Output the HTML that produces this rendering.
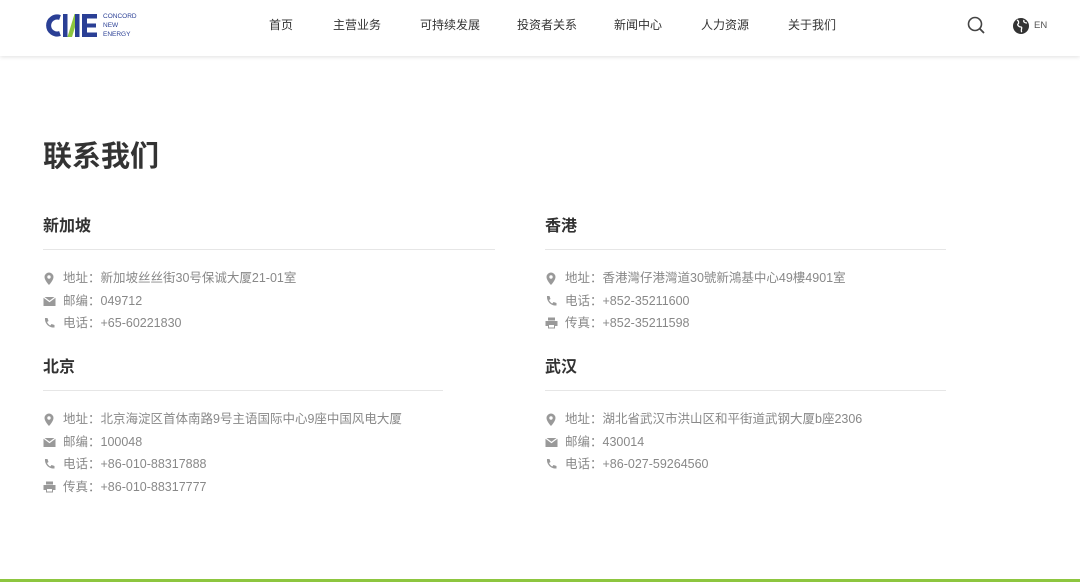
<!DOCTYPE html><html><head><meta charset="utf-8"><style>
*{margin:0;padding:0;box-sizing:border-box}
body{width:1080px;height:582px;overflow:hidden;background:#fff;font-family:"Liberation Sans","Noto Sans CJK SC",sans-serif;position:relative}
.hd{position:absolute;left:0;top:0;width:1080px;height:56px;background:#fff;box-shadow:0 1px 4px rgba(0,0,0,.12)}
.nav a{position:absolute;top:16px;font-size:12px;color:#333;text-decoration:none}
h1{position:absolute;left:43px;top:133px;font-size:29px;color:#333;font-weight:bold}
.blk{position:absolute}
.blk h3{font-size:16px;color:#333;font-weight:bold;height:24px;line-height:24px}
.blk hr{border:0;border-top:1px solid #e6e6e6;margin-top:10px}
.blk .r{position:relative;padding-left:20px;font-size:12.5px;color:#888;height:22.7px;line-height:22.7px}
.blk ul{margin-top:17px;list-style:none}
.r svg{position:absolute;left:0;top:5px}
.bar{position:absolute;left:0;bottom:0;width:1080px;height:3px;background:#8dc63f}
</style></head><body>
<div class="hd">
<svg style="position:absolute;left:44px;top:13px" width="56" height="25" viewBox="0 0 56 25">
<path d="M16 4.5 A8.5 8.5 0 1 0 16 20.5" fill="none" stroke="#2a3f95" stroke-width="5"/>
<rect x="19" y="1" width="4.5" height="23" fill="#2a3f95"/>
<path d="M23.5 24 L30.5 1 L35 1 L28 24Z" fill="#8dc63f"/>
<rect x="31" y="1" width="4.5" height="23" fill="#2a3f95"/>
<path d="M38 1h15v4.5h-10v5h9v4h-9v5h10v4.5H38z" fill="#2a3f95"/>
</svg>
<div style="position:absolute;left:103px;top:12px;font-size:6.5px;line-height:9px;color:#2a3f95">CONCORD<br>NEW<br>ENERGY</div>
<div class="nav">
<a style="left:269px">首页</a><a style="left:333px">主营业务</a><a style="left:420px">可持续发展</a><a style="left:517px">投资者关系</a><a style="left:614px">新闻中心</a><a style="left:701px">人力资源</a><a style="left:788px">关于我们</a></div>
<svg style="position:absolute;left:967px;top:16px" width="20" height="20" viewBox="0 0 20 20"><circle cx="8" cy="8" r="6.5" fill="none" stroke="#444" stroke-width="1.6"/><path d="M12.8 12.8L17 17" stroke="#444" stroke-width="1.8"/></svg>
<svg style="position:absolute;left:1012px;top:17px" width="18" height="18" viewBox="0 0 18 18"><circle cx="9" cy="9" r="8" fill="#333"/><path d="M5 3c2 1 2 3 1 4s1 3 3 3-1 4 1 5M12 3c-1 2 1 3 3 3" fill="none" stroke="#fff" stroke-width="1.3"/></svg>
<div style="position:absolute;left:1034px;top:20px;font-size:9.5px;color:#555">EN</div>
</div>
<h1>联系我们</h1>
<div class="blk" style="left:43px;top:215px;width:452px"><h3>新加坡</h3><hr><ul>
<li class="r"><svg width="12" height="13"><path d="M6 0.5a4.5 4.5 0 0 0-4.5 4.5c0 3.3 4.5 8 4.5 8s4.5-4.7 4.5-8A4.5 4.5 0 0 0 6 .5zm0 6.2a1.7 1.7 0 1 1 0-3.4 1.7 1.7 0 0 1 0 3.4z" fill="#999"/></svg>地址：新加坡丝丝街30号保诚大厦21-01室</li>
<li class="r"><svg width="13" height="12"><path d="M0.5 2h12v9h-12z" fill="#999"/><path d="M0.5 2l6 4.5 6-4.5" fill="none" stroke="#fff" stroke-width="1.2"/></svg>邮编：049712</li>
<li class="r"><svg width="12" height="12"><path d="M2 1l2.5 0 1 3-1.5 1c.8 1.7 2 2.9 3.3 3.5l1.2-1.5 3 1v2.5c-5.5 0.5-10-4-9.5-9.5z" fill="#999"/></svg>电话：+65-60221830</li></ul></div>
<div class="blk" style="left:545px;top:215px;width:401px"><h3>香港</h3><hr><ul>
<li class="r"><svg width="12" height="13"><path d="M6 0.5a4.5 4.5 0 0 0-4.5 4.5c0 3.3 4.5 8 4.5 8s4.5-4.7 4.5-8A4.5 4.5 0 0 0 6 .5zm0 6.2a1.7 1.7 0 1 1 0-3.4 1.7 1.7 0 0 1 0 3.4z" fill="#999"/></svg>地址：香港灣仔港灣道30號新鴻基中心49樓4901室</li>
<li class="r"><svg width="12" height="12"><path d="M2 1l2.5 0 1 3-1.5 1c.8 1.7 2 2.9 3.3 3.5l1.2-1.5 3 1v2.5c-5.5 0.5-10-4-9.5-9.5z" fill="#999"/></svg>电话：+852-35211600</li>
<li class="r"><svg width="13" height="12"><path d="M3 0.5h7v3H3zM0.5 4h12v5h-2.5v2.5h-7V9H0.5z" fill="#999"/><path d="M4 8h5v2.5H4z" fill="#fff"/></svg>传真：+852-35211598</li></ul></div>
<div class="blk" style="left:43px;top:356px;width:400px"><h3>北京</h3><hr><ul>
<li class="r"><svg width="12" height="13"><path d="M6 0.5a4.5 4.5 0 0 0-4.5 4.5c0 3.3 4.5 8 4.5 8s4.5-4.7 4.5-8A4.5 4.5 0 0 0 6 .5zm0 6.2a1.7 1.7 0 1 1 0-3.4 1.7 1.7 0 0 1 0 3.4z" fill="#999"/></svg>地址：北京海淀区首体南路9号主语国际中心9座中国风电大厦</li>
<li class="r"><svg width="13" height="12"><path d="M0.5 2h12v9h-12z" fill="#999"/><path d="M0.5 2l6 4.5 6-4.5" fill="none" stroke="#fff" stroke-width="1.2"/></svg>邮编：100048</li>
<li class="r"><svg width="12" height="12"><path d="M2 1l2.5 0 1 3-1.5 1c.8 1.7 2 2.9 3.3 3.5l1.2-1.5 3 1v2.5c-5.5 0.5-10-4-9.5-9.5z" fill="#999"/></svg>电话：+86-010-88317888</li>
<li class="r"><svg width="13" height="12"><path d="M3 0.5h7v3H3zM0.5 4h12v5h-2.5v2.5h-7V9H0.5z" fill="#999"/><path d="M4 8h5v2.5H4z" fill="#fff"/></svg>传真：+86-010-88317777</li></ul></div>
<div class="blk" style="left:545px;top:356px;width:401px"><h3>武汉</h3><hr><ul>
<li class="r"><svg width="12" height="13"><path d="M6 0.5a4.5 4.5 0 0 0-4.5 4.5c0 3.3 4.5 8 4.5 8s4.5-4.7 4.5-8A4.5 4.5 0 0 0 6 .5zm0 6.2a1.7 1.7 0 1 1 0-3.4 1.7 1.7 0 0 1 0 3.4z" fill="#999"/></svg>地址：湖北省武汉市洪山区和平街道武钢大厦b座2306</li>
<li class="r"><svg width="13" height="12"><path d="M0.5 2h12v9h-12z" fill="#999"/><path d="M0.5 2l6 4.5 6-4.5" fill="none" stroke="#fff" stroke-width="1.2"/></svg>邮编：430014</li>
<li class="r"><svg width="12" height="12"><path d="M2 1l2.5 0 1 3-1.5 1c.8 1.7 2 2.9 3.3 3.5l1.2-1.5 3 1v2.5c-5.5 0.5-10-4-9.5-9.5z" fill="#999"/></svg>电话：+86-027-59264560</li></ul></div>
<div class="bar"></div>
</body></html>
